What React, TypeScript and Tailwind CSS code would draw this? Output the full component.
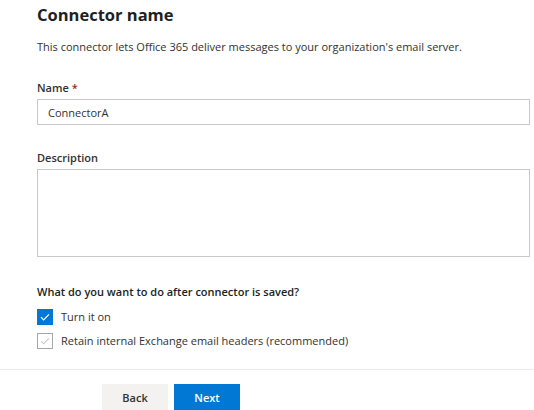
import { useState } from "react";

function Check({ checked, muted }: { checked: boolean; muted?: boolean }) {
  if (checked && !muted) {
    return (
      <span className="flex h-4 w-4 items-center justify-center bg-[#0078d4]">
        <svg className="h-3 w-3" viewBox="0 0 12 12" fill="none">
          <path d="M2 6.2l2.6 2.6L10 3.4" stroke="white" strokeWidth="1.2" />
        </svg>
      </span>
    );
  }
  return (
    <span className="flex h-4 w-4 items-center justify-center border border-[#a6a6a6] bg-white">
      <svg className="h-3 w-3" viewBox="0 0 12 12" fill="none">
        <path d="M2 6.2l2.6 2.6L10 3.4" stroke="#c8c8c8" strokeWidth="1.1" />
      </svg>
    </span>
  );
}

export default function App() {
  const [name, setName] = useState("ConnectorA");

  return (
    <div className="h-[410px] w-full overflow-hidden bg-white font-['Open_Sans',sans-serif] text-[#323130]">
      <div className="pl-[37px] pr-[4px]">
        <h1 className="pt-[3px] text-[16.5px] font-bold leading-[24px] text-[#201f1e]">
          Connector name
        </h1>
        <p className="mt-[12px] text-[11px] leading-[16px]">
          This connector lets Office 365 deliver messages to your organization's email server.
        </p>

        <label className="mt-[25px] block text-[11px] font-semibold leading-[16px]">
          Name <span className="text-[#a4262c]">*</span>
        </label>
        <input
          value={name}
          onChange={(e) => setName(e.target.value)}
          className="mt-[3px] block h-[26px] w-full border border-[#c8c8c8] px-[10px] text-[11px] outline-none"
        />

        <label className="mt-[25px] block text-[11px] font-semibold leading-[16px]">
          Description
        </label>
        <textarea className="mt-[3px] block h-[88px] w-full resize-none border border-[#c8c8c8] px-[10px] text-[11px] outline-none" />

        <p className="mt-[27px] text-[11px] font-semibold leading-[16px] text-[#201f1e]">
          What do you want to do after connector is saved?
        </p>
        <div className="mt-[9px] flex flex-col gap-[8px]">
          <div className="flex items-center gap-[8px]">
            <Check checked />
            <span className="text-[11px] leading-[16px]">Turn it on</span>
          </div>
          <div className="flex items-center gap-[8px]">
            <Check checked muted />
            <span className="text-[11px] leading-[16px]">
              Retain internal Exchange email headers (recommended)
            </span>
          </div>
        </div>
      </div>

      <div className="mt-[20px] border-t border-[#edebe9]" />

      <div className="flex gap-[6px] pl-[102px] pt-[14px]">
        <button className="h-[28px] w-[66px] bg-[#f3f2f1] text-[11px] font-semibold text-[#323130]">
          Back
        </button>
        <button className="h-[28px] w-[66px] bg-[#0078d4] text-[11px] font-semibold text-white">
          Next
        </button>
      </div>
    </div>
  );
}
